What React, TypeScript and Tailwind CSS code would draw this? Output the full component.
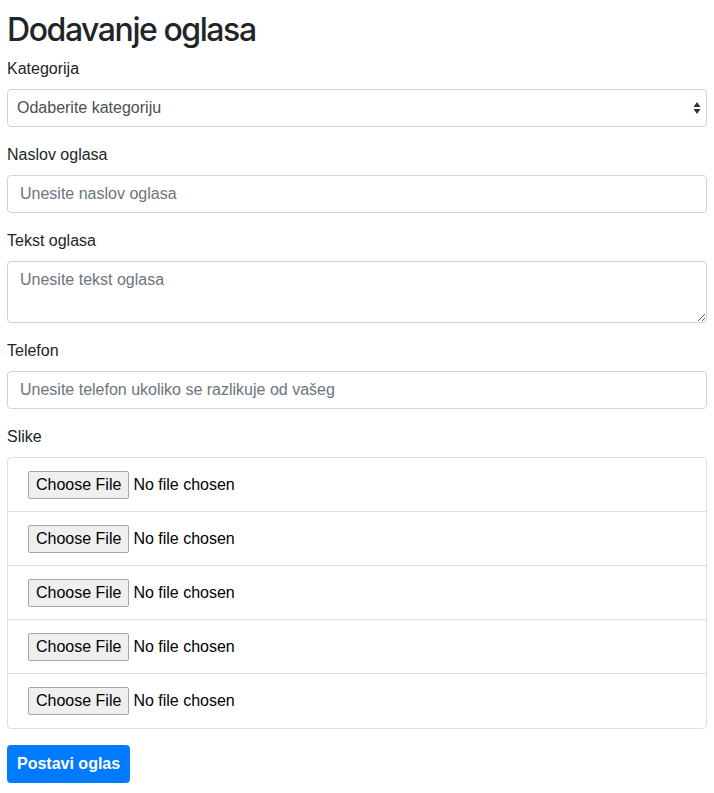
import { ChangeEvent, useState } from "react";

const SLOTS = [0, 1, 2, 3, 4];

function Field({ label, children }: { label: string; children: React.ReactNode }) {
  return (
    <div className="mb-4">
      <label className="block mb-2 leading-6 text-base text-[#212529]">{label}</label>
      {children}
    </div>
  );
}

const inputCls =
  "block w-full h-[38px] px-3 rounded border border-[#ced4da] bg-white text-base leading-6 text-[#495057] placeholder:text-[#6c757d] focus:outline-none focus:border-[#80bdff]";

function FileRow({ last }: { last: boolean }) {
  const [name, setName] = useState("");
  return (
    <div className={"h-[54px] px-5 flex items-center " + (last ? "" : "border-b border-[#dfdfdf]")}>
      <label className="flex items-center gap-1 cursor-pointer text-base text-black">
        <span className="h-[28px] px-[7px] flex items-center bg-[#efefef] border border-[#a6a6a6] rounded-[2px]">
          Choose File
        </span>
        <span>{name || "No file chosen"}</span>
        <input
          type="file"
          className="hidden"
          onChange={(e: ChangeEvent<HTMLInputElement>) => setName(e.target.files?.[0]?.name ?? "")}
        />
      </label>
    </div>
  );
}

export default function App() {
  return (
    <div
      className="min-h-screen bg-white px-[7px] pt-[11px] text-[#212529]"
      style={{ fontFamily: '"Liberation Sans", Arial, Helvetica, sans-serif' }}
    >
      <h2 className="text-[32px] leading-[1.2] font-medium tracking-[-0.045em] mb-2 font-[Inter,_'Liberation_Sans',_sans-serif]">
        Dodavanje oglasa
      </h2>

      <Field label="Kategorija">
        <div className="relative">
          <select className="block w-full h-[38px] pl-[9px] pr-8 rounded border border-[#ced4da] bg-white text-base text-[#495057] appearance-none focus:outline-none">
            <option>Odaberite kategoriju</option>
            <option>Nekretnine</option>
            <option>Vozila</option>
          </select>
          {/* native double arrow */}
          <svg className="absolute right-[5px] top-[12px] pointer-events-none" width="10" height="14" viewBox="0 0 10 14">
            <path d="M5 1 L8.5 6 L1.5 6 Z" fill="#333" />
            <path d="M5 13 L8.5 8 L1.5 8 Z" fill="#333" />
          </svg>
        </div>
      </Field>

      <Field label="Naslov oglasa">
        <input className={inputCls} placeholder="Unesite naslov oglasa" />
      </Field>

      <Field label="Tekst oglasa">
        <textarea
          rows={2}
          className="block w-full h-[62px] px-3 py-[6px] rounded border border-[#ced4da] bg-white text-base leading-6 text-[#495057] placeholder:text-[#6c757d] focus:outline-none"
          placeholder="Unesite tekst oglasa"
        />
      </Field>

      <Field label="Telefon">
        <input className={inputCls} placeholder="Unesite telefon ukoliko se razlikuje od vašeg" />
      </Field>

      <Field label="Slike">
        <div className="rounded border border-[#dfdfdf]">
          {SLOTS.map((i) => (
            <FileRow key={i} last={i === SLOTS.length - 1} />
          ))}
        </div>
      </Field>

      <button className="h-[38px] px-[10px] rounded bg-[#007bff] text-white text-base font-bold hover:bg-[#0069d9]">
        Postavi oglas
      </button>
    </div>
  );
}
